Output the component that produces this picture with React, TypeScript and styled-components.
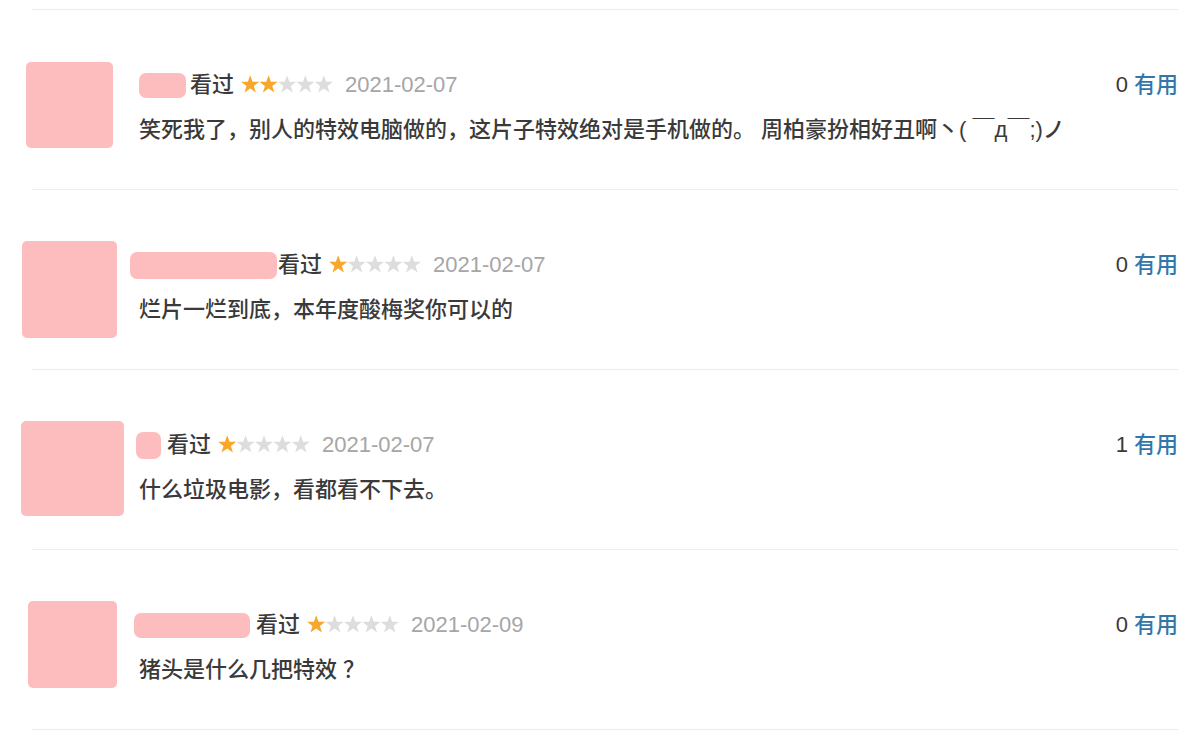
import React from 'react';
import styled, {createGlobalStyle} from "styled-components";

type ReviewType = {
    avatar: { left: number; top: number; width: number; height: number };
    name: { left: number; width: number; height: number; gap: number };
    rating: number;
    date: string;
    votes: number;
    text: string;
}

const reviews: ReviewType[] = [
    {
        avatar: {left: -6, top: 52, width: 87, height: 86},
        name: {left: 0, width: 47, height: 25, gap: 4},
        rating: 2,
        date: "2021-02-07",
        votes: 0,
        text: "笑死我了，别人的特效电脑做的，这片子特效绝对是手机做的。 周柏豪扮相好丑啊丶( ￣д￣;)ノ",
    },
    {
        avatar: {left: -10, top: 51, width: 95, height: 97},
        name: {left: -9, width: 147, height: 27, gap: 1},
        rating: 1,
        date: "2021-02-07",
        votes: 0,
        text: "烂片一烂到底，本年度酸梅奖你可以的",
    },
    {
        avatar: {left: -11, top: 51, width: 103, height: 95},
        name: {left: -3, width: 25, height: 27, gap: 6},
        rating: 1,
        date: "2021-02-07",
        votes: 1,
        text: "什么垃圾电影，看都看不下去。",
    },
    {
        avatar: {left: -4, top: 51, width: 89, height: 87},
        name: {left: -5, width: 116, height: 25, gap: 6},
        rating: 1,
        date: "2021-02-09",
        votes: 0,
        text: "猪头是什么几把特效 ？",
    },
];

// five point star, one cell 18.4px wide
const STAR = "M9.2 0.2 L11.5 6.7 L18.3 6.8 L12.9 10.9 L14.9 17.5 L9.2 13.6 L3.5 17.5 L5.5 10.9 L0.1 6.8 L6.9 6.7 Z";

const Stars = ({rating}: { rating: number }) => {
    return (
        <StarsSvg viewBox="0 0 92 18" width={92} height={18}>
            {[0, 1, 2, 3, 4].map(i => (
                <path key={i} d={STAR} transform={`translate(${i * 18.4},0)`}
                      fill={i < rating ? "#f8a72b" : "#dddddd"}/>
            ))}
        </StarsSvg>
    );
};

export default function App() {
    return (
        <>
            <GlobalStyle/>
            <Page>
                <List>
                    {reviews.map((r, idx) => (
                        <Item key={idx}>
                            <AvatarCol>
                                <Avatar style={{
                                    marginLeft: r.avatar.left,
                                    marginTop: r.avatar.top,
                                    width: r.avatar.width,
                                    height: r.avatar.height
                                }}/>
                            </AvatarCol>
                            <Content>
                                <Header>
                                    <Info>
                                        <NameBlock style={{
                                            marginLeft: r.name.left,
                                            width: r.name.width,
                                            height: r.name.height,
                                            marginRight: r.name.gap
                                        }}/>
                                        <Watched>看过</Watched>
                                        <Stars rating={r.rating}/>
                                        <DateText>{r.date}</DateText>
                                    </Info>
                                    <Votes>
                                        <Count>{r.votes}</Count>
                                        <Useful href="#">有用</Useful>
                                    </Votes>
                                </Header>
                                <Comment>{r.text}</Comment>
                            </Content>
                        </Item>
                    ))}
                </List>
            </Page>
        </>
    );
}

const GlobalStyle = createGlobalStyle`
  body {
    margin: 0;
    background: #fff;
    font-family: "Liberation Sans", "Noto Sans CJK SC", sans-serif;
    color: #3a3a3a;
  }
`

const Page = styled.div`
  padding: 9px 0 0 32px;
  width: 1146px;
`

const List = styled.div`
  border-top: 1px solid #ececec;
`

const Item = styled.div`
  display: flex;
  height: 179px;
  border-bottom: 1px solid #ececec;
`

const AvatarCol = styled.div`
  width: 107px;
  flex-shrink: 0;
`

const Avatar = styled.div`
  background: #fdbcbd;
  border-radius: 5px;
`

const Content = styled.div`
  flex: 1;
  padding-top: 60px;
`

const Header = styled.div`
  display: flex;
  align-items: center;
  justify-content: space-between;
  height: 30px;
  font-size: 22px;
  line-height: 1;
`

const Info = styled.div`
  display: flex;
  align-items: center;
`

const NameBlock = styled.div`
  background: #fdbcbd;
  border-radius: 7px;
`

const Cjk = styled.span`
  font-family: "Noto Sans CJK SC", sans-serif;
  font-weight: 500;
  margin-top: -6px;
`

const Watched = styled(Cjk)`
  color: #3a3a3a;
  margin-right: 7px;
`

const StarsSvg = styled.svg`
  display: block;
  margin-top: -3px;
  margin-right: 12px;
`

const DateText = styled.span`
  color: #a6a6a6;
`

const Votes = styled.div`
  display: flex;
  align-items: center;
  gap: 6px;
`

const Count = styled.span`
  color: #3a3a3a;
`

const Useful = styled(Cjk)`
  color: #3377aa;
  cursor: pointer;
`

const Comment = styled.p`
  margin: 15px 0 0;
  font-size: 22px;
  line-height: 30px;
  font-weight: 500;
  color: #3a3a3a;
`
